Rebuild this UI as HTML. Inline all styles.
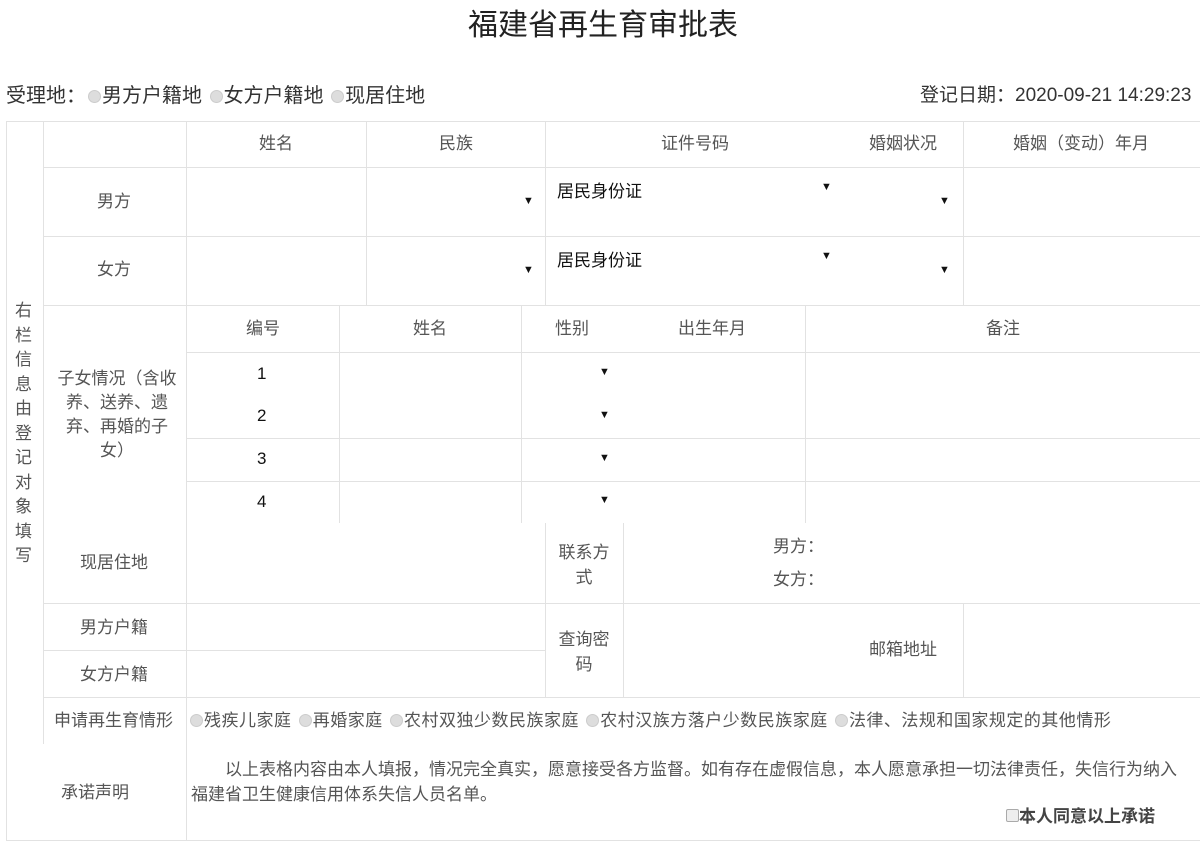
<!DOCTYPE html>
<html><head><meta charset="utf-8"><style>
body{margin:0;width:1200px;height:841px;background:#fff;overflow:hidden;font-family:"Liberation Sans","Noto Sans CJK SC",sans-serif;position:relative;}
.h{position:absolute;height:1px;background:#e2e2e2}
.v{position:absolute;width:1px;background:#e2e2e2}
.t{position:absolute;font-size:17px;color:#555;white-space:nowrap;line-height:20px}
.c{text-align:center;transform:translateX(-50%)}
.k{color:#111}
.r{display:inline-block;width:11px;height:11px;border-radius:50%;background:#ddd;border:1px solid #ccc;vertical-align:-1px;margin:0 1px 0 2px}
.a{position:absolute;font-size:11px;color:#111}
</style></head><body>
<div class="t c k" style="left:603px;top:8px;font-size:30px;line-height:36px;color:#222">福建省再生育审批表</div>
<div class="t k" style="left:6px;top:85px;font-size:20px;line-height:22px;color:#333">受理地：<span class="r"></span>男方户籍地 <span class="r"></span>女方户籍地 <span class="r"></span>现居住地</div>
<div class="t k" style="left:920px;top:85px;font-size:19px;line-height:22px;color:#333">登记日期：2020-09-21 14:29:23</div>

<div class="h" style="left:6px;width:1194px;top:121px"></div>
<div class="h" style="left:43px;width:1157px;top:167px"></div>
<div class="h" style="left:43px;width:1157px;top:236px"></div>
<div class="h" style="left:43px;width:1157px;top:305px"></div>
<div class="h" style="left:186px;width:1014px;top:352px"></div>
<div class="h" style="left:186px;width:1014px;top:438px"></div>
<div class="h" style="left:186px;width:1014px;top:481px"></div>
<div class="h" style="left:43px;width:1157px;top:603px"></div>
<div class="h" style="left:43px;width:502px;top:650px"></div>
<div class="h" style="left:43px;width:1157px;top:697px"></div>
<div class="h" style="left:6px;width:1194px;top:840px"></div>

<div class="v" style="left:6px;top:121px;height:720px"></div>
<div class="v" style="left:43px;top:121px;height:623px"></div>
<div class="v" style="left:186px;top:121px;height:720px"></div>
<div class="v" style="left:366px;top:121px;height:184px"></div>
<div class="v" style="left:545px;top:121px;height:184px"></div>
<div class="v" style="left:963px;top:121px;height:184px"></div>
<div class="v" style="left:339px;top:305px;height:218px"></div>
<div class="v" style="left:521px;top:305px;height:218px"></div>
<div class="v" style="left:805px;top:305px;height:218px"></div>
<div class="v" style="left:545px;top:523px;height:174px"></div>
<div class="v" style="left:623px;top:523px;height:174px"></div>
<div class="v" style="left:963px;top:603px;height:94px"></div>

<div class="t" style="left:15px;top:299px;width:20px;line-height:24.5px;white-space:normal">右栏信息由登记对象填写</div>

<div class="t c" style="left:276px;top:134px">姓名</div>
<div class="t c" style="left:456px;top:134px">民族</div>
<div class="t c" style="left:695px;top:134px">证件号码</div>
<div class="t c" style="left:903px;top:134px">婚姻状况</div>
<div class="t c" style="left:1081px;top:134px">婚姻（变动）年月</div>

<div class="t c" style="left:114px;top:192px">男方</div>
<div class="t c" style="left:114px;top:260px">女方</div>
<div class="a" style="left:523px;top:195px">▼</div>
<div class="a" style="left:523px;top:264px">▼</div>
<div class="t k" style="left:557px;top:182px">居民身份证</div>
<div class="t k" style="left:557px;top:251px">居民身份证</div>
<div class="a" style="left:821px;top:181px">▼</div>
<div class="a" style="left:821px;top:250px">▼</div>
<div class="a" style="left:939px;top:195px">▼</div>
<div class="a" style="left:939px;top:264px">▼</div>

<div class="t c" style="left:263px;top:319px">编号</div>
<div class="t c" style="left:430px;top:319px">姓名</div>
<div class="t c" style="left:572px;top:319px">性别</div>
<div class="t c" style="left:712px;top:319px">出生年月</div>
<div class="t c" style="left:1003px;top:319px">备注</div>

<div class="t" style="left:56px;top:367px;width:122px;line-height:24px;white-space:normal;text-align:center">子女情况（含收养、送养、遗弃、再婚的子女）</div>
<div class="t k" style="left:257px;top:364px">1</div>
<div class="t k" style="left:257px;top:406px">2</div>
<div class="t k" style="left:257px;top:449px">3</div>
<div class="t k" style="left:257px;top:492px">4</div>
<div class="a" style="left:599px;top:366px">▼</div>
<div class="a" style="left:599px;top:409px">▼</div>
<div class="a" style="left:599px;top:452px">▼</div>
<div class="a" style="left:599px;top:494px">▼</div>

<div class="t c" style="left:114px;top:553px">现居住地</div>
<div class="t c" style="left:584px;top:540px;line-height:25px">联系方<br>式</div>
<div class="t" style="left:773px;top:537px">男方：</div>
<div class="t" style="left:773px;top:570px">女方：</div>
<div class="t c" style="left:114px;top:618px">男方户籍</div>
<div class="t c" style="left:114px;top:665px">女方户籍</div>
<div class="t c" style="left:584px;top:627px;line-height:25px">查询密<br>码</div>
<div class="t" style="left:869px;top:640px">邮箱地址</div>

<div class="t" style="left:54px;top:711px">申请再生育情形</div>
<div class="t" style="left:190px;top:711px;letter-spacing:0.5px"><span class="r" style="margin-left:0"></span>残疾儿家庭 <span class="r"></span>再婚家庭 <span class="r"></span>农村双独少数民族家庭 <span class="r"></span>农村汉族方落户少数民族家庭 <span class="r"></span>法律、法规和国家规定的其他情形</div>

<div class="t" style="left:61px;top:783px">承诺声明</div>
<div class="t" style="left:191px;top:757px;line-height:25px">　　以上表格内容由本人填报，情况完全真实，愿意接受各方监督。如有存在虚假信息，本人愿意承担一切法律责任，失信行为纳入<br>福建省卫生健康信用体系失信人员名单。</div>
<div class="t" style="left:1006px;top:807px;font-weight:bold;color:#444"><span style="display:inline-block;width:11px;height:11px;border:1px solid #aaa;background:#eee;border-radius:2px;vertical-align:0"></span>本人同意以上承诺</div>
</body></html>
